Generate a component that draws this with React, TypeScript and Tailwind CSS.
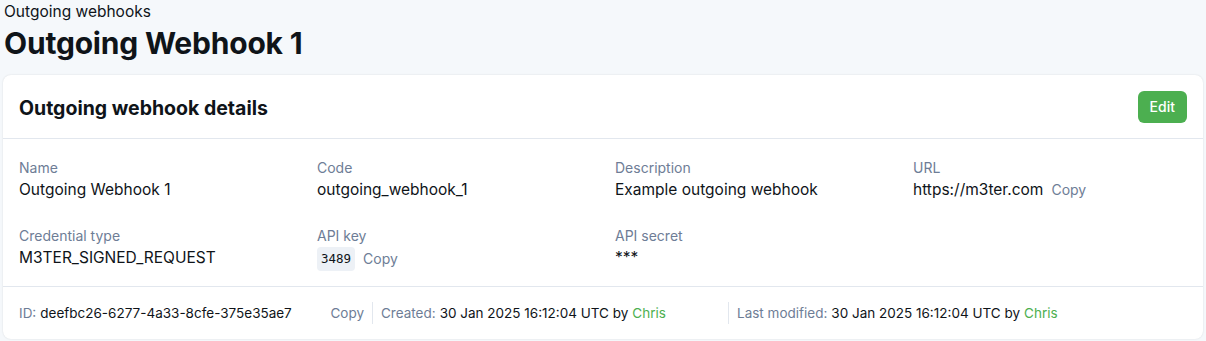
import React from 'react';

type Field = {
  label: string;
  value: string;
  copy?: boolean;
  code?: boolean;
};

const rows: Field[][] = [
  [
    { label: 'Name', value: 'Outgoing Webhook 1' },
    { label: 'Code', value: 'outgoing_webhook_1' },
    { label: 'Description', value: 'Example outgoing webhook' },
    { label: 'URL', value: 'https://m3ter.com', copy: true },
  ],
  [
    { label: 'Credential type', value: 'M3TER_SIGNED_REQUEST' },
    { label: 'API key', value: '3489', copy: true, code: true },
    { label: 'API secret', value: '***' },
  ],
];

function CopyLink() {
  return <button className="ml-2 text-[14px] text-[#6e7d96] hover:text-[#4a5568]">Copy</button>;
}

export default function App() {
  return (
    <div className="min-h-screen bg-[#f5f8fb] px-[3px] text-[#0f1419]" style={{ fontFamily: 'Inter, "Noto Sans", sans-serif' }}>
      {/* Page header */}
      <div className="px-[1px] pt-[2px]">
        <p className="text-[15.5px] leading-[20px]">Outgoing webhooks</p>
        <h1 className="mt-[3px] text-[30px] font-bold leading-[36px] tracking-[-0.2px]">Outgoing Webhook 1</h1>
      </div>

      {/* Details card */}
      <div className="mt-[14px] rounded-lg bg-white shadow-[0_0_2px_rgba(0,0,0,0.12)]">
        <div className="flex h-[64px] items-center justify-between border-b border-[#e2e7ee] px-4">
          <h2 className="pt-[4px] text-[19.5px] font-bold">Outgoing webhook details</h2>
          <button className="h-[32px] rounded-md bg-[#4caf50] px-3 text-[14px] font-medium text-white">Edit</button>
        </div>

        <div className="flex flex-col gap-y-[25px] px-4 pt-[19px] pb-[15px]">
          {rows.map((row, i) => (
            <div key={i} className="grid grid-cols-4 gap-x-6">
              {row.map((f) => (
                <div key={f.label}>
                  <div className="text-[14px] leading-[20px] text-[#6e7d96]">{f.label}</div>
                  <div className="mt-[1px] flex items-center text-[15.5px] leading-[22px]">
                    {f.code ? (
                      <code className="rounded bg-[#edf1f6] px-[4px] py-[1px] font-['DejaVu_Sans_Mono',monospace] text-[12.5px]">
                        {f.value}
                      </code>
                    ) : (
                      <span>{f.value}</span>
                    )}
                    {f.copy && <CopyLink />}
                  </div>
                </div>
              ))}
            </div>
          ))}
        </div>

        {/* Footer meta */}
        <div className="flex h-[53px] items-center border-t border-[#e2e7ee] px-4 text-[13.5px]">
          <div className="flex w-[353px] items-center">
            <span className="text-[#6e7d96]">ID:</span>
            <span className="ml-1">deefbc26-6277-4a33-8cfe-375e35ae7</span>
            <span className="ml-auto pr-2 text-[#6e7d96]">Copy</span>
          </div>
          <div className="flex h-[22px] w-[356px] items-center border-l border-[#e2e7ee] pl-2">
            <span className="text-[#6e7d96]">Created:</span>
            <span className="ml-1">30 Jan 2025 16:12:04 UTC by</span>
            <span className="ml-1 text-[#4caf50]">Chris</span>
          </div>
          <div className="flex h-[22px] items-center border-l border-[#e2e7ee] pl-2">
            <span className="text-[#6e7d96]">Last modified:</span>
            <span className="ml-1">30 Jan 2025 16:12:04 UTC by</span>
            <span className="ml-1 text-[#4caf50]">Chris</span>
          </div>
        </div>
      </div>
    </div>
  );
}
